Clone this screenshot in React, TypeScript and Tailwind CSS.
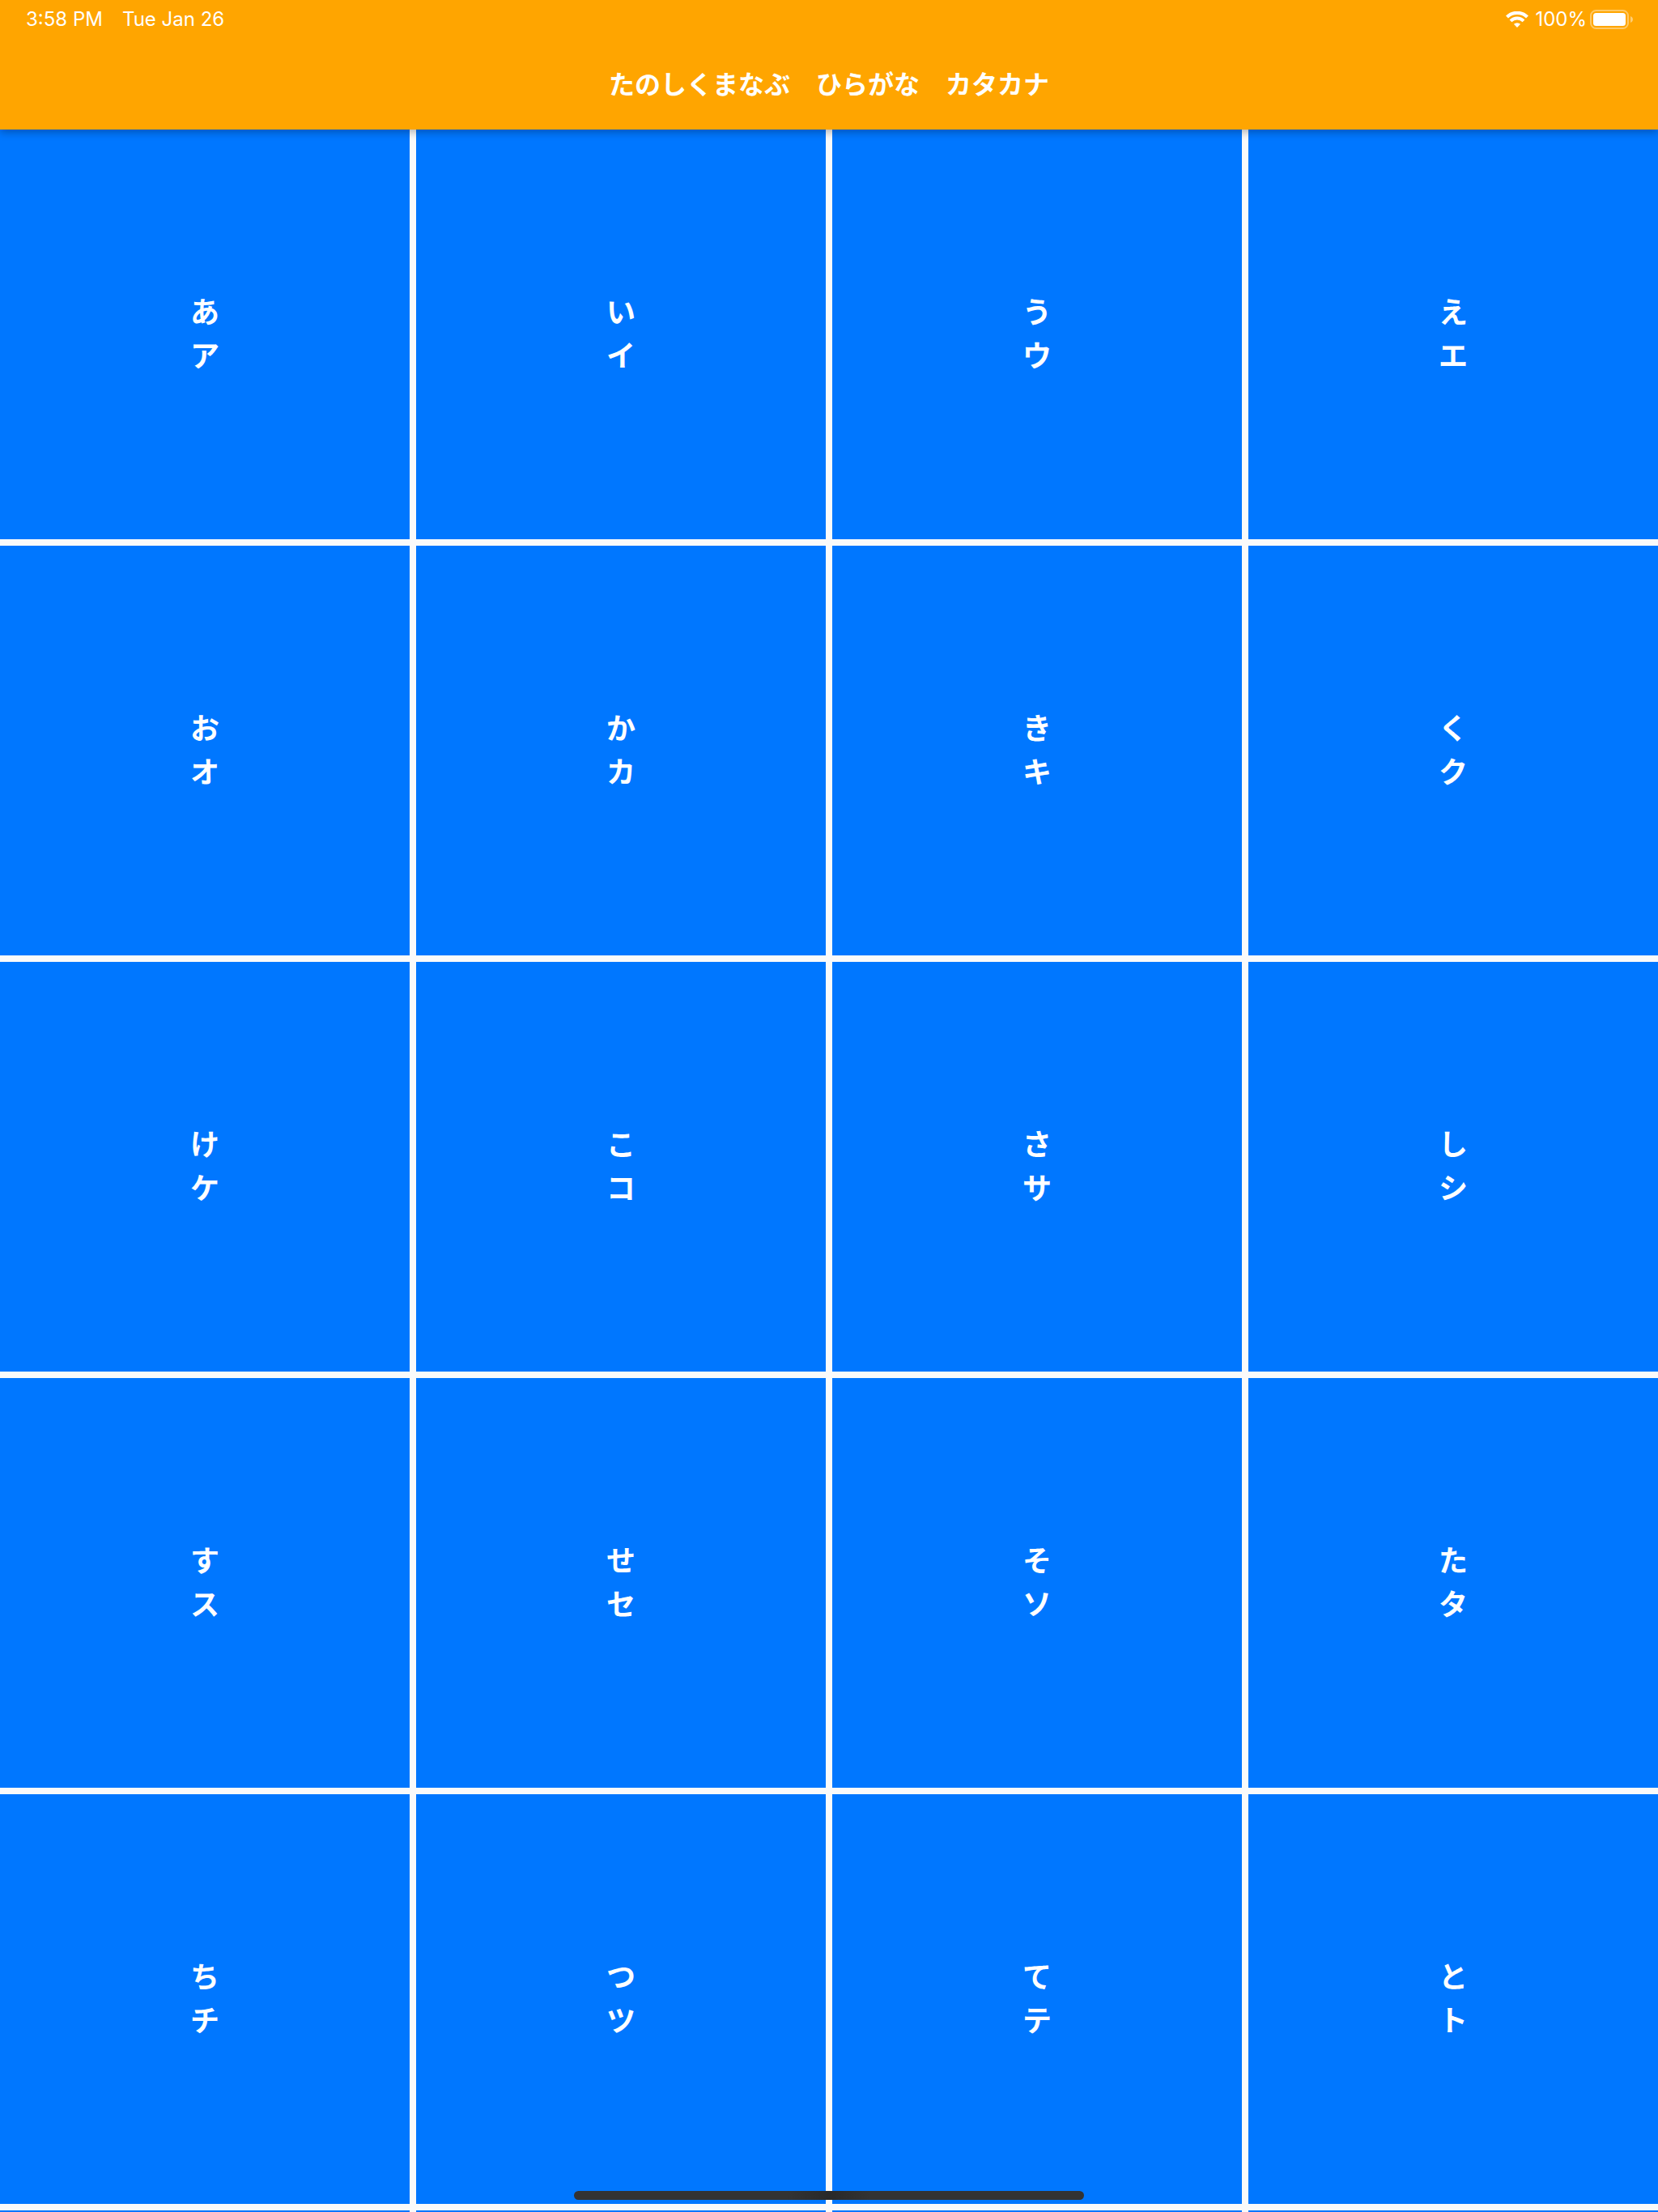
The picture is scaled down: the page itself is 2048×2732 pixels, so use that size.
const KANA: [string, string][] = [
  ['あ', 'ア'], ['い', 'イ'], ['う', 'ウ'], ['え', 'エ'],
  ['お', 'オ'], ['か', 'カ'], ['き', 'キ'], ['く', 'ク'],
  ['け', 'ケ'], ['こ', 'コ'], ['さ', 'サ'], ['し', 'シ'],
  ['す', 'ス'], ['せ', 'セ'], ['そ', 'ソ'], ['た', 'タ'],
  ['ち', 'チ'], ['つ', 'ツ'], ['て', 'テ'], ['と', 'ト'],
];

function WifiIcon() {
  return (
    <svg className="h-5 w-7" viewBox="0 0 28 20" fill="none" stroke="white" aria-label="Wi-Fi">
      <path d="M1.500 6.900a18 18 0 0 1 25 0" strokeWidth="4.200" />
      <path d="M6 11.900a11.400 11.400 0 0 1 16 0" strokeWidth="4" />
      <path d="M14 20l-4.100-4.200a6 6 0 0 1 8.200 0z" fill="white" stroke="none" />
    </svg>
  );
}

function BatteryIcon() {
  return (
    <svg className="h-6 w-[54px]" viewBox="0 0 54 24" aria-label="Battery full">
      <rect x="1" y="1" width="46" height="22" rx="6.5" fill="none" stroke="white" strokeOpacity="0.4" strokeWidth="2" />
      <rect x="4" y="4" width="40" height="16" rx="3.5" fill="white" />
      <path d="M50 8c1.8.7 3 2.200 3 4s-1.200 3.300-3 4z" fill="white" fillOpacity="0.45" />
    </svg>
  );
}

function StatusBar() {
  return (
    <div className="flex h-12 items-center justify-between pr-[30px] pl-8 font-['Inter',sans-serif] text-2xl">
      <div className="flex gap-6">
        <span>3:58 PM</span>
        <span>Tue Jan 26</span>
      </div>
      <div className="flex items-center gap-2">
        <WifiIcon />
        <div className="flex items-center gap-1">
          <span>100%</span>
          <BatteryIcon />
        </div>
      </div>
    </div>
  );
}

function KanaTile({ hiragana, katakana }: { hiragana: string; katakana: string }) {
  return (
    <button
      type="button"
      className="flex aspect-square flex-col items-center justify-center bg-[#0077ff] pb-1.5 text-4xl leading-[54px] font-semibold text-white"
    >
      <span>{hiragana}</span>
      <span>{katakana}</span>
    </button>
  );
}

export default function App() {
  return (
    <div className="relative flex h-screen flex-col overflow-hidden bg-[#fafafa] font-['Noto_Sans_CJK_JP',sans-serif]" lang="ja">
      <header className="z-10 shrink-0 bg-[#ffa500] text-white shadow-[0_3px_10px_rgba(0,0,0,0.3)]">
        <StatusBar />
        <div className="flex h-28 items-center justify-center pb-1">
          <h1 className="text-[32px] leading-[48px] font-bold">たのしくまなぶ　ひらがな　カタカナ</h1>
        </div>
      </header>
      <main className="grid grid-cols-4 gap-2">
        {KANA.map(([hiragana, katakana]) => (
          <KanaTile key={hiragana} hiragana={hiragana} katakana={katakana} />
        ))}
        <div className="col-span-4 grid grid-cols-4 gap-2">
          <div className="h-2 bg-[#0077ff]" />
          <div className="h-2 bg-[#0077ff]" />
          <div className="h-2 bg-[#0077ff]" />
          <div className="h-2 bg-[#0077ff]" />
        </div>
      </main>
      <div className="absolute inset-x-0 bottom-[15px] z-20 flex justify-center">
        <div className="h-[11px] w-[630px] rounded-full bg-linear-to-r from-[#333333] from-42% via-[#292929] to-[#333333] to-58%" />
      </div>
    </div>
  );
}
